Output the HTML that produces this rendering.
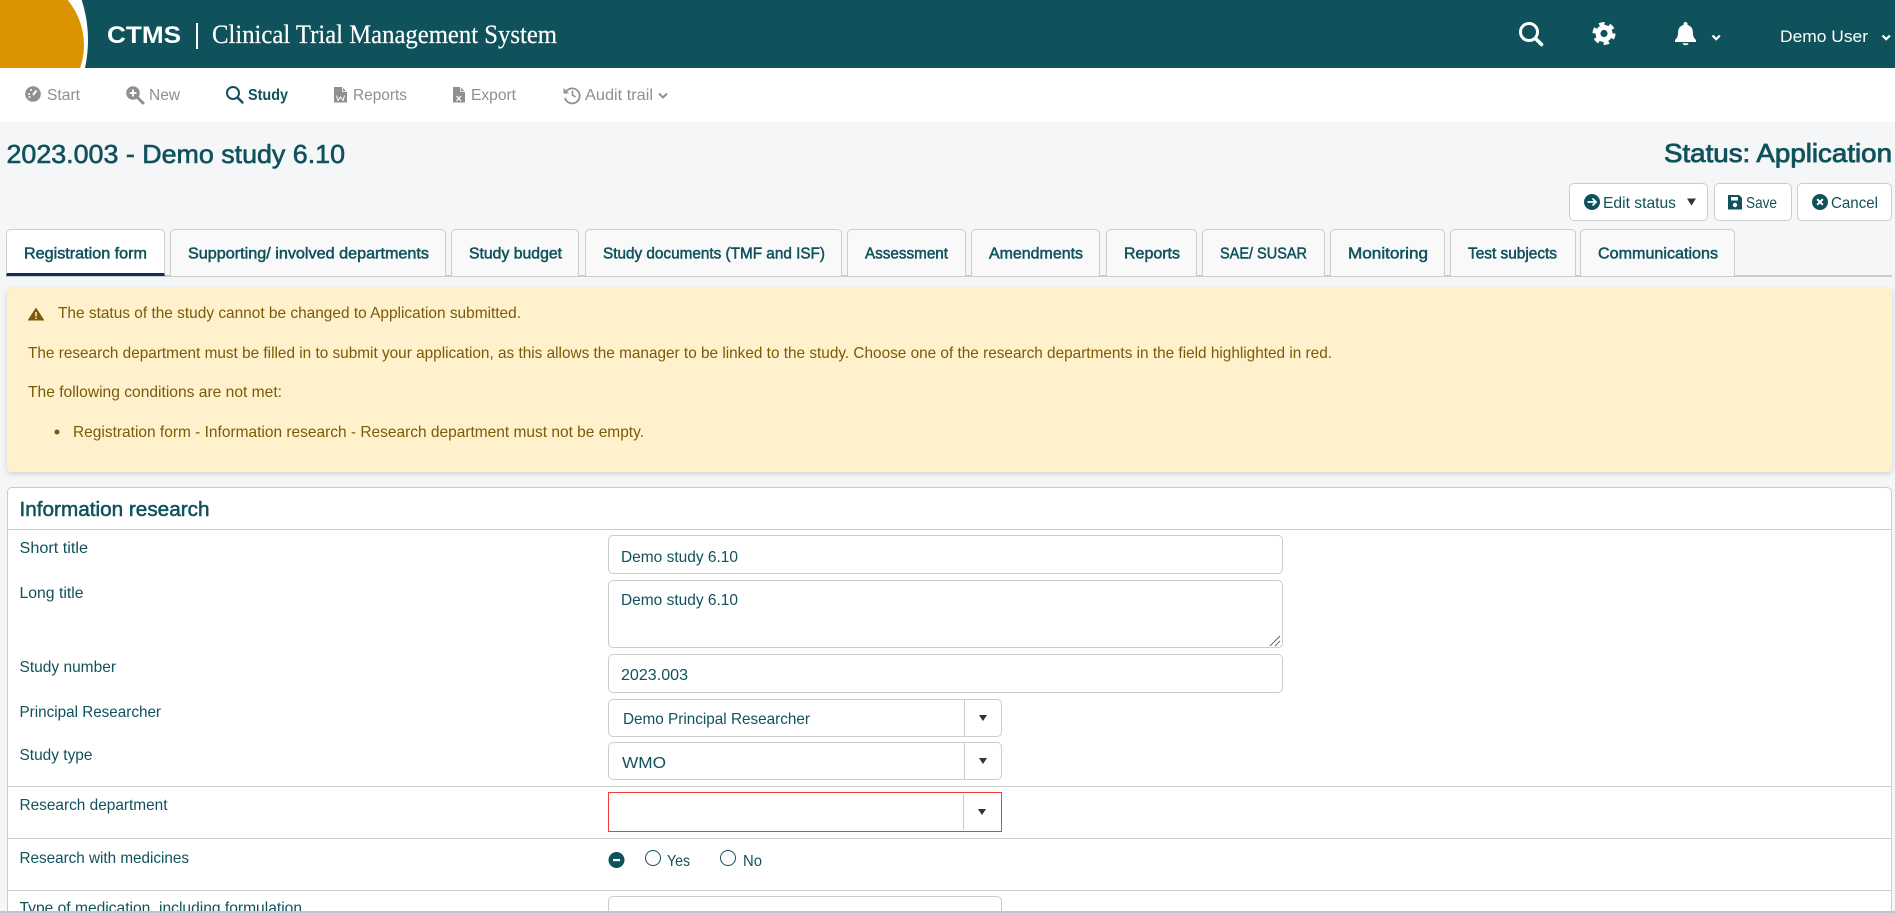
<!DOCTYPE html>
<html lang="en"><head><meta charset="utf-8"><title>CTMS</title>
<style>
html,body{margin:0;padding:0;width:1895px;height:913px;overflow:hidden;background:#f4f6f8}
body{position:relative;font-family:"Liberation Sans",sans-serif}
.b{position:absolute;box-sizing:border-box}
.hd{left:0;top:0;width:1895px;height:68px;background:#0f525c;overflow:hidden}
.nv{left:0;top:68px;width:1895px;height:54px;background:#fff}
.btn{background:#fff;border:1px solid #ccc;border-radius:5px;top:183px;height:38px}
.tab{top:229px;height:47px;background:#f9f9fa;border:1px solid #ccc;border-bottom:0;border-radius:5px 5px 0 0}
.hr{left:8px;width:1884px;height:1px;background:#ccc}
.in{background:#fff;border:1px solid #ccc;border-radius:5px;left:608px}
svg{position:absolute;left:0;top:0}
text{font-family:"Liberation Sans",sans-serif;font-size:16px;fill:#0f525c}
.m{stroke:#0f525c;stroke-width:.5px}
.g{fill:#8f8f8f;font-size:16px}
.a{fill:#7b5a08}
</style></head><body>
<div class="b hd"></div>
<div class="b nv"></div>
<div class="b btn" style="left:1569px;width:139px"></div>
<div class="b btn" style="left:1714px;width:78px"></div>
<div class="b btn" style="left:1797px;width:95px"></div>
<div class="b" style="left:6px;top:275px;width:1886px;height:2px;background:#ccc"></div>
<div class="b tab" style="left:6px;width:159px;background:#fff;border-bottom:3px solid #0a2f5c"></div>
<div class="b tab" style="left:170px;width:276px"></div>
<div class="b tab" style="left:451px;width:128px"></div>
<div class="b tab" style="left:585px;width:257px"></div>
<div class="b tab" style="left:847px;width:119px"></div>
<div class="b tab" style="left:971px;width:129px"></div>
<div class="b tab" style="left:1106px;width:91px"></div>
<div class="b tab" style="left:1202px;width:123px"></div>
<div class="b tab" style="left:1330px;width:115px"></div>
<div class="b tab" style="left:1450px;width:126px"></div>
<div class="b tab" style="left:1580px;width:155px"></div>
<div class="b" style="left:7px;top:288px;width:1885px;height:184px;background:#fff1cc;border-radius:4px;box-shadow:0 2px 6px rgba(0,0,0,.15)"></div>
<div class="b" style="left:7px;top:487px;width:1885px;height:430px;background:#fff;border:1px solid #ccc;border-radius:5px 5px 0 0"></div>
<div class="b hr" style="top:529px"></div>
<div class="b hr" style="top:786px"></div>
<div class="b hr" style="top:838px"></div>
<div class="b hr" style="top:890px"></div>
<div class="b in" style="top:535px;width:675px;height:39px"></div>
<div class="b in" style="top:580px;width:675px;height:68px"></div>
<div class="b in" style="top:654px;width:675px;height:39px"></div>
<div class="b in" style="top:699px;width:394px;height:38px"></div>
<div class="b in" style="top:742px;width:394px;height:38px"></div>
<div class="b in" style="top:792px;width:394px;height:40px;border:1.500px solid #f23a3a;border-radius:0"></div>
<div class="b in" style="top:896px;width:394px;height:30px"></div>
<div class="b" style="left:964px;top:700px;width:1px;height:36px;background:#ccc"></div>
<div class="b" style="left:964px;top:743px;width:1px;height:36px;background:#ccc"></div>
<div class="b" style="left:963px;top:794px;width:1px;height:36px;background:#ccc"></div>
<div class="b" style="left:0;top:911px;width:1895px;height:2px;background:#b9c6d6"></div>

<svg width="1895" height="913" viewBox="0 0 1895 913" xmlns="http://www.w3.org/2000/svg">
<!-- logo -->
<clipPath id="c"><rect width="1895" height="68"/></clipPath>
<g clip-path="url(#c)"><circle cx="-42" cy="40" r="130" fill="#fff"/><circle cx="14" cy="45" r="70" fill="#d99400"/><rect x="0" y="0" width="30" height="0" fill="#d99400"/></g>
<text x="107" y="43" textLength="74" lengthAdjust="spacingAndGlyphs" style="font-size:24px;font-weight:700;fill:#fff">CTMS</text>
<rect x="196" y="23" width="2" height="26" fill="#fff"/>
<text x="212" y="43" textLength="345" lengthAdjust="spacingAndGlyphs" style="font-family:'Liberation Serif',serif;font-size:26px;fill:#fff;stroke:#fff;stroke-width:.2px">Clinical Trial Management System</text>
<!-- header icons -->
<g fill="none" stroke="#fff"><circle cx="1529" cy="32" r="8.500" stroke-width="3"/><path d="M1535.500 38.500l6 6" stroke-width="3.600" stroke-linecap="round"/></g>
<g><circle cx="1604" cy="33.500" r="8.500" fill="#fff"/><circle cx="1604" cy="33.500" r="9.800" fill="none" stroke="#fff" stroke-width="3.400" stroke-dasharray="5.400 4.860"/><circle cx="1604" cy="33.500" r="3.600" fill="#0f525c"/></g>
<path d="M1685.500 22c1.200 0 2 .9 2 2v1c3.600.8 5.400 3.800 5.400 7.400 0 5 2 6.300 3.100 7.700v1.900h-21v-1.900c1.100-1.400 3.100-2.700 3.100-7.700 0-3.600 1.800-6.600 5.400-7.400v-1c0-1.100.8-2 2-2z" fill="#fff"/><path d="M1682.500 43.300h6c0 1.100-1.400 1.900-3 1.900s-3-.8-3-1.900z" fill="#fff"/>
<path d="M1712.500 35.500l3.700 3.700 3.700-3.700M1882.500 35.500l3.700 3.700 3.700-3.700" fill="none" stroke="#fff" stroke-width="2.200"/>
<text x="1780" y="42" textLength="88" lengthAdjust="spacingAndGlyphs" style="font-size:17px;fill:#fff">Demo User</text>
<!-- nav -->
<circle cx="33" cy="94" r="7.800" fill="#8f8f8f"/><path d="M33 95l3.500-4.500" stroke="#fff" stroke-width="2"/><circle cx="29" cy="94" r="1" fill="#fff"/><circle cx="31" cy="90" r="1" fill="#fff"/><circle cx="29.500" cy="97" r="1" fill="#fff"/>
<text class="g" x="47" y="100" textLength="33" lengthAdjust="spacingAndGlyphs">Start</text>
<circle cx="133" cy="93" r="6.800" fill="#8f8f8f"/><path d="M138 98l5 5" stroke="#8f8f8f" stroke-width="3" stroke-linecap="round"/><path d="M133 89.500v7M129.500 93h7" stroke="#fff" stroke-width="1.800"/>
<text class="g" x="149" y="100" textLength="31" lengthAdjust="spacingAndGlyphs">New</text>
<circle cx="233" cy="93" r="6" fill="none" stroke="#0f525c" stroke-width="2"/><path d="M237.500 97.500l5 5" stroke="#0f525c" stroke-width="2.400" stroke-linecap="round"/>
<text x="248" y="100" textLength="40" lengthAdjust="spacingAndGlyphs" style="font-size:15.500px;font-weight:700">Study</text>
<path d="M334 87h8l5 5v10.500h-13z" fill="#8f8f8f"/><path d="M336.500 95.500l1.500 5 2.500-3.500 2.500 3.500 1.500-5" stroke="#fff" stroke-width="1" fill="none"/><path d="M342.500 87v4.500h4.500" stroke="#fff" stroke-width=".8" fill="none"/>
<text class="g" x="353" y="100" textLength="54" lengthAdjust="spacingAndGlyphs">Reports</text>
<path d="M453 87h7.500l4.500 5v10.500h-12z" fill="#8f8f8f"/><path d="M456.500 96l4.500 5M461 96l-4.500 5" stroke="#fff" stroke-width="1.300"/><path d="M460.500 87v4.500h4.500" stroke="#fff" stroke-width=".8" fill="none"/>
<text class="g" x="471" y="100" textLength="45" lengthAdjust="spacingAndGlyphs">Export</text>
<path d="M566.500 91a7.500 7.500 0 1 1 -1.500 7" fill="none" stroke="#8f8f8f" stroke-width="1.800"/><path d="M563.500 88v5.500h5.500z" fill="#8f8f8f"/><path d="M572.500 90.500v4.500l3 2" fill="none" stroke="#8f8f8f" stroke-width="1.600"/>
<text class="g" x="585" y="100" textLength="68" lengthAdjust="spacingAndGlyphs">Audit trail</text>
<path d="M659 93.500l4 4 4-4" fill="none" stroke="#8f8f8f" stroke-width="2"/>
<!-- titles -->
<text class="m" x="6.500" y="163" textLength="338.500" lengthAdjust="spacingAndGlyphs" style="font-size:26px;stroke-width:.6px">2023.003 - Demo study 6.10</text>
<text class="m" x="1664" y="162" textLength="228" lengthAdjust="spacingAndGlyphs" style="font-size:26px;stroke-width:.8px">Status: Application</text>
<!-- buttons -->
<circle cx="1592" cy="202" r="8" fill="#0f525c"/><path d="M1587.500 202h8M1592.500 198.500l3.500 3.500-3.500 3.500" fill="none" stroke="#fff" stroke-width="1.800"/>
<text x="1603" y="208" textLength="73" lengthAdjust="spacingAndGlyphs">Edit status</text>
<path d="M1687 198.500h9l-4.500 7z" fill="#333"/>
<path d="M1728 195h11l3 3v11.500h-14z" fill="#0f525c"/><rect x="1731" y="197" width="7" height="3.500" fill="#fff"/><circle cx="1735" cy="205" r="2.200" fill="#fff"/>
<text x="1746" y="208" textLength="31" lengthAdjust="spacingAndGlyphs">Save</text>
<circle cx="1820" cy="202" r="8" fill="#0f525c"/><path d="M1817.200 199.200l5.600 5.600M1822.800 199.200l-5.600 5.600" stroke="#fff" stroke-width="2"/>
<text x="1831" y="208" textLength="47" lengthAdjust="spacingAndGlyphs">Cancel</text>
<!-- tabs -->
<g class="tabs">
<text class="m" x="24" y="258.500" textLength="123" lengthAdjust="spacingAndGlyphs">Registration form</text>
<text class="m" x="188" y="258.500" textLength="241" lengthAdjust="spacingAndGlyphs">Supporting/ involved departments</text>
<text class="m" x="469" y="258.500" textLength="93" lengthAdjust="spacingAndGlyphs">Study budget</text>
<text class="m" x="603" y="258.500" textLength="222" lengthAdjust="spacingAndGlyphs">Study documents (TMF and ISF)</text>
<text class="m" x="865" y="258.500" textLength="83" lengthAdjust="spacingAndGlyphs">Assessment</text>
<text class="m" x="989" y="258.500" textLength="94" lengthAdjust="spacingAndGlyphs">Amendments</text>
<text class="m" x="1124" y="258.500" textLength="56" lengthAdjust="spacingAndGlyphs">Reports</text>
<text class="m" x="1220" y="258.500" textLength="87" lengthAdjust="spacingAndGlyphs">SAE/ SUSAR</text>
<text class="m" x="1348" y="258.500" textLength="80" lengthAdjust="spacingAndGlyphs">Monitoring</text>
<text class="m" x="1468" y="258.500" textLength="89" lengthAdjust="spacingAndGlyphs">Test subjects</text>
<text class="m" x="1598" y="258.500" textLength="120" lengthAdjust="spacingAndGlyphs">Communications</text>
</g>
<!-- alert -->
<path d="M36 307.500l8.500 13h-17z" fill="#7b5a08"/><path d="M36 312v4.500M36 317.500v1.500" stroke="#fff1cc" stroke-width="1.500"/>
<text class="a" x="58" y="318" textLength="463" lengthAdjust="spacingAndGlyphs">The status of the study cannot be changed to Application submitted.</text>
<text class="a" x="28" y="358" textLength="1304" lengthAdjust="spacingAndGlyphs">The research department must be filled in to submit your application, as this allows the manager to be linked to the study. Choose one of the research departments in the field highlighted in red.</text>
<text class="a" x="28" y="397" textLength="254" lengthAdjust="spacingAndGlyphs">The following conditions are not met:</text>
<circle cx="57" cy="432" r="2.500" fill="#7b5a08"/>
<text class="a" x="73" y="437" textLength="571" lengthAdjust="spacingAndGlyphs">Registration form - Information research - Research department must not be empty.</text>
<!-- form -->
<text class="m" x="19.500" y="516" textLength="190" lengthAdjust="spacingAndGlyphs" style="font-size:20px">Information research</text>
<text x="19.500" y="553" textLength="68.500" lengthAdjust="spacingAndGlyphs">Short title</text>
<text x="19.500" y="598" textLength="64" lengthAdjust="spacingAndGlyphs">Long title</text>
<text x="19.500" y="672" textLength="96.500" lengthAdjust="spacingAndGlyphs">Study number</text>
<text x="19.500" y="717" textLength="141.500" lengthAdjust="spacingAndGlyphs">Principal Researcher</text>
<text x="19.500" y="760" textLength="73" lengthAdjust="spacingAndGlyphs">Study type</text>
<text x="19.500" y="810" textLength="148" lengthAdjust="spacingAndGlyphs">Research department</text>
<text x="19.500" y="863" textLength="169.500" lengthAdjust="spacingAndGlyphs">Research with medicines</text>
<text x="621" y="562" textLength="117" lengthAdjust="spacingAndGlyphs">Demo study 6.10</text>
<text x="621" y="605" textLength="117" lengthAdjust="spacingAndGlyphs">Demo study 6.10</text>
<path d="M1270 646l10-10M1275 646l5-5" stroke="#666" stroke-width="1"/>
<text x="621" y="680" textLength="67" lengthAdjust="spacingAndGlyphs">2023.003</text>
<text x="623" y="724" textLength="187" lengthAdjust="spacingAndGlyphs">Demo Principal Researcher</text>
<path d="M979 715h8l-4 6z" fill="#333"/>
<text x="622" y="768" textLength="44" lengthAdjust="spacingAndGlyphs">WMO</text>
<path d="M979 758h8l-4 6z" fill="#333"/>
<path d="M978 809h8l-4 6z" fill="#333"/>
<circle cx="616.500" cy="860" r="8" fill="#0f525c"/><rect x="613" y="859" width="7" height="2.200" fill="#fff"/>
<circle cx="653" cy="858" r="7.500" fill="#fff" stroke="#0f525c"/>
<text x="667" y="866" textLength="23" lengthAdjust="spacingAndGlyphs">Yes</text>
<circle cx="728" cy="858" r="7.500" fill="#fff" stroke="#0f525c"/>
<text x="743" y="866" textLength="19" lengthAdjust="spacingAndGlyphs">No</text>
<clipPath id="d"><rect width="1895" height="911"/></clipPath>
<text clip-path="url(#d)" x="19.500" y="913" textLength="282.500" lengthAdjust="spacingAndGlyphs">Type of medication, including formulation</text>
</svg>
</body></html>
